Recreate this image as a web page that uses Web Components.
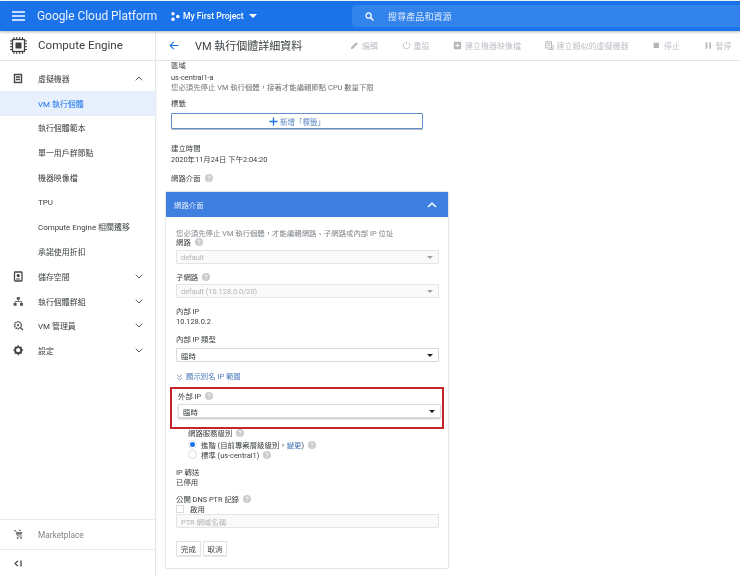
<!DOCTYPE html>
<html lang="zh-Hant"><head><meta charset="utf-8"><title>VM</title>
<style>
html,body{margin:0;padding:0;width:740px;height:576px;overflow:hidden;background:#fff;font-family:Roboto,"Noto Sans CJK TC",sans-serif;color:#3c4043;}
</style></head><body>
<gcp-app></gcp-app>
<script>
const FONT='Roboto,"Noto Sans CJK TC",sans-serif';
function el(name,html,css){
  customElements.define(name,class extends HTMLElement{
    constructor(){super();const r=this.attachShadow({mode:'open'});
      r.innerHTML='<style>'+css+'</style>'+(typeof html==='function'?html(this):html);}
  });
}
const HELP='<svg width="8" height="8" viewBox="0 0 8 8" style="vertical-align:-1px;margin-left:4px"><circle cx="4" cy="4" r="4" fill="#c9cbce"/><path d="M2.900 3.100a1.100 1.100 0 1 1 1.700 1c-.4.3-.6.4-.6.9" fill="none" stroke="#fff" stroke-width=".8"/><circle cx="4" cy="6.200" r=".5" fill="#fff"/></svg>';

el('top-bar',`
<svg class="burger" width="13" height="10" viewBox="0 0 13 10"><path d="M0 1h13M0 5h13M0 9h13" stroke="#fff" stroke-width="1.400"/></svg>
<span class="brand">Google Cloud Platform</span>
<svg class="dots" width="9" height="9" viewBox="0 0 9 9"><circle cx="2" cy="1.800" r="1.700" fill="#fff"/><circle cx="2" cy="7.200" r="1.700" fill="#fff"/><circle cx="6.800" cy="4.500" r="1.800" fill="#fff"/></svg>
<span class="proj">My First Project</span>
<svg class="caret" width="8" height="4" viewBox="0 0 8 4"><path d="M0 0h8L4 4z" fill="#fff"/></svg>
<div class="search"><svg width="9" height="9" viewBox="0 0 10 10"><circle cx="4" cy="4" r="2.900" fill="none" stroke="#fff" stroke-width="1.400"/><path d="M6.200 6.200 9.400 9.400" stroke="#fff" stroke-width="1.600"/></svg><span>搜尋產品和資源</span></div>`,
`:host{display:flex;align-items:center;height:30px;margin-top:1px;background:#1a73e8;color:#fff;box-shadow:0 1px 3px rgba(0,0,0,.3);position:relative;z-index:2}
.burger{margin-left:12px;flex:none}.brand{margin-left:12px;font:400 11.900px ${FONT};width:134px;white-space:nowrap;color:#e8f0fe;flex:none}
.dots{flex:none}.proj{margin-left:3px;font:500 8.600px ${FONT};white-space:nowrap;width:60px;flex:none}
.caret{margin-left:6px;flex:none}
.search{margin-left:95px;width:388px;height:22px;background:#3383ec;border-radius:4px 0 0 4px;display:flex;align-items:center;flex:none}
.search svg{margin-left:13px}.search span{margin-left:14px;font:400 9.100px ${FONT};color:#dbe8fb;white-space:nowrap}`);

const chip='<svg width="19" height="19" viewBox="0 0 19 19"><path d="M5 1v17M7.700 1v17M10.700 1v17M13.500 1v17M1 5h17M1 7.700h17M1 10.700h17M1 13.500h17" stroke="#3c4043" stroke-width="1"/><rect x="3.500" y="3.500" width="12" height="12" fill="#fff" stroke="#3c4043" stroke-width="1.300"/><rect x="6.500" y="6.500" width="6" height="6" fill="#3c4043"/></svg>';
el('side-bar',`
<div class="head">${chip}<span>Compute Engine</span></div>
<div class="nav"><slot></slot></div>
<div class="foot"><slot name="foot"></slot></div>`,
`:host{display:flex;flex-direction:column;flex:none;border-right:1px solid #e6e7e8;box-shadow:1px 0 2px rgba(0,0,0,.04);height:545px;box-sizing:border-box;width:156px}
.head{height:30px;padding-bottom:1px;display:flex;align-items:center;border-bottom:1px solid #e3e4e6;box-sizing:border-box;flex:none}
.head svg{margin-left:9px}.head span{margin-left:10px;font:400 11.600px ${FONT};color:#3c4043;white-space:nowrap}
.nav{padding-top:5.200px;flex:1}
.foot{border-top:1px solid #e8e9ea;}`);

const ICONS={
 vm:'<rect x="1.500" y="1.500" width="7" height="8" fill="none" stroke="#444" stroke-width="1.400"/><path d="M3 4h4M3 6.500h4" stroke="#444" stroke-width="1.300"/>',
 disk:'<rect x="1.500" y="1" width="7.500" height="9" rx=".8" fill="none" stroke="#444" stroke-width="1.300"/><circle cx="5.200" cy="4.600" r="1.600" fill="#444"/><path d="M3 8h4" stroke="#444"/>',
 group:'<path d="M3.800 1h3v2.700h-3zM.6 7h3v2.800h-3zM7 7h3v2.800h-3z" fill="#555"/><path d="M5.300 3.700v2M2 7V5.500h6.600V7" fill="none" stroke="#555" stroke-width=".8"/>',
 mgr:'<circle cx="5" cy="5.200" r="3.400" fill="none" stroke="#555" stroke-width="1.600" stroke-dasharray="1.500 .6"/><circle cx="5" cy="5.200" r="1.100" fill="#555"/><path d="M7 7.300 10 10" stroke="#555" stroke-width="1.200"/>',
 gear:'<circle cx="5.200" cy="5.200" r="3.100" fill="none" stroke="#444" stroke-width="1.900"/><path d="M5.200 .3v2M5.200 8v2.200M.4 5.200h2M8 5.200h2.200M1.800 1.800l1.400 1.400M7.200 7.200l1.400 1.400M8.600 1.800 7.200 3.200M3.200 7.200 1.800 8.600" stroke="#444" stroke-width="1.200"/>',
 cart:'<path d="M1 1.500h1.500L4.500 7H9" fill="none" stroke="#777" stroke-width="1"/><path d="M3 3h6.500L8.300 5.800H4z" fill="#777"/><circle cx="4.600" cy="9" r="1" fill="#777"/><circle cx="8.200" cy="9" r="1" fill="#777"/><path d="M6 .5 7 2 8.200.8" stroke="#777" fill="none"/>'};
el('nav-item',h=>{
  const ic=h.getAttribute('icon'),ch=h.getAttribute('chev');
  return (ic?`<svg class="i" width="11" height="11" viewBox="0 0 11 11">${ICONS[ic]}</svg>`:'')+
  `<span class="t"><slot></slot></span>`+
  (ch?`<svg class="c" width="8" height="5" viewBox="0 0 8 5"><path d="${ch==='up'?'M.7 4.300 4 1l3.300 3.300':'M.7.7 4 4 7.300.7'}" fill="none" stroke="#5f6368" stroke-width="1"/></svg>`:'');
},`:host{display:flex;align-items:center;height:24.730px;position:relative;font:400 7.950px ${FONT};color:#3c4043;white-space:nowrap}
:host([active]){background:#e8f0fe;color:#1a73e8}
.i{position:absolute;left:13px;top:7px}.t{position:absolute;left:38px}.c{position:absolute;left:135px;top:10px}`);

el('foot-item',`<svg width="11" height="11" viewBox="0 0 11 11">${ICONS.cart}</svg><span><slot></slot></span>`,
`:host{display:flex;align-items:center;height:29px;border-bottom:1px solid #e8e9ea;font:400 8.300px ${FONT};color:#80868b}
svg{margin-left:13px}span{margin-left:14px}`);
el('foot-collapse',`<svg width="8" height="7" viewBox="0 0 8 7"><path d="M4 .8 1 3.500 4 6.200" fill="none" stroke="#333" stroke-width="1.100"/><path d="M7 .5v6" stroke="#333" stroke-width="1.200"/></svg>`,
`:host{display:flex;align-items:center;height:26px}svg{margin-left:14px}`);

const T={
 edit:'<path d="M1 10 1.600 7.400 7.600 1.400 9.600 3.400 3.600 9.400z" fill="#b4b6b9"/>',
 reset:'<path d="M3.200 2.200a4 4 0 1 0 4.600 0" fill="none" stroke="#b4b6b9" stroke-width="1"/><path d="M5.500.5v4" stroke="#b4b6b9" stroke-width="1"/>',
 snap:'<rect x="1" y="1" width="9" height="9" rx="1" fill="#b4b6b9"/><path d="M5.500 3v5M3 5.500h5" stroke="#fff" stroke-width="1.300"/>',
 clone:'<rect x="1" y="1" width="7" height="7.500" fill="none" stroke="#b4b6b9" stroke-width="1.200"/><path d="M2.500 3.300h4M2.500 5.300h4" stroke="#b4b6b9" stroke-width="1"/><path d="M4 10.300h6V5" fill="none" stroke="#b4b6b9" stroke-width="1.200"/>',
 stop:'<rect x="2" y="2.200" width="6.500" height="6.500" fill="#b4b6b9"/>',
 pause:'<path d="M2 1.500h2v8H2zM6.500 1.500h2v8h-2z" fill="#b4b6b9"/>'};
el('tool-btn',h=>`<svg width="9" height="9" viewBox="0 0 11 11">${T[h.getAttribute('icon')]}</svg><span><slot></slot></span>`,
`:host{display:flex;align-items:center;gap:3px;font:400 8px ${FONT};color:#bdc1c6;white-space:nowrap}`);
el('sub-bar',`
<svg class="back" width="10" height="9" viewBox="0 0 11 10"><path d="M10.500 5H1.500M5.300 1 1.200 5l4.100 4" fill="none" stroke="#1a73e8" stroke-width="1.200"/></svg>
<span class="title">VM 執行個體詳細資料</span><div class="tools"><slot></slot></div>`,
`:host{display:flex;align-items:center;height:30px;padding-bottom:1px;box-sizing:border-box;border-bottom:1px solid #e3e4e6;flex:none;position:relative;z-index:1;background:#fff}
.back{margin-left:13px;flex:none}.title{margin-left:16px;font:400 11px ${FONT};color:#3c4043;white-space:nowrap;width:155px;flex:none}
.tools{display:flex;gap:23.500px;flex:none}`);

el('select-box',h=>`<span><slot></slot></span>`+(h.hasAttribute('nocaret')?'':`<svg width="6" height="3" viewBox="0 0 6 3"><path d="M0 0h6L3 3z" fill="${h.hasAttribute('disabled')?'#9aa0a6':'#222'}"/></svg>`),
`:host{display:flex;align-items:center;justify-content:space-between;box-sizing:border-box;width:263px;height:14px;border:1px solid #e4e5e6;border-radius:1px;padding:0 5px 0 4px;font:400 7.400px ${FONT};color:#3c4043;background:#fff}
:host([disabled]){background:#fafafa;color:#b0b3b6}
:host([raised]){box-shadow:0 1px 2px rgba(0,0,0,.25);border-color:#ddd}`);
el('add-button',`<svg width="9" height="9" viewBox="0 0 9 9"><path d="M4.500 .5v8M.5 4.500h8" stroke="#1a73e8" stroke-width="1.300"/></svg><span><slot></slot></span>`,
`:host{display:flex;align-items:center;justify-content:center;gap:2px;box-sizing:border-box;width:252px;height:16px;border:1px solid #5f8ec8;border-radius:1px;box-shadow:0 1px 0 #b8bcc0;font:400 7.500px ${FONT};color:#5c87c4}`);
el('flat-button',`<slot></slot>`,
`:host{display:flex;align-items:center;justify-content:center;box-sizing:border-box;height:15px;border:1px solid #dfe1e3;box-shadow:0 1px 0 #e8e8e8;border-radius:1px;font:400 7.400px ${FONT};color:#3c4043;background:#fff}`);
el('radio-dot','',
`:host{display:inline-block;box-sizing:border-box;width:9px;height:9px;border-radius:50%;border:1px solid #dcdcdc;position:relative;flex:none}
:host([on]){border:2px solid #fff;outline:1px solid #dde3ee;background:#1a73e8;outline-offset:-1px}`);

el('net-panel',`<div class="bar"><span>網路介面</span><svg width="10" height="6" viewBox="0 0 10 6"><path d="M1 5 5 1.200 9 5" fill="none" stroke="#fff" stroke-width="1.500"/></svg></div><div class="body"><slot></slot></div>`,
`:host{display:block;box-sizing:border-box;width:282px;height:376px;margin-left:10px;box-shadow:0 0 2px rgba(0,0,0,.3);background:#fff;font:400 7.400px ${FONT};color:#3c4043;white-space:nowrap}
.bar{height:25px;background:#3f7fe0;display:flex;align-items:center;justify-content:space-between;padding:0 11px 0 8px;color:#e4edfb}
.body{padding:0 10px}`);

el('gcp-app',`
<top-bar></top-bar>
<div class="row">
  <side-bar>
    <nav-item icon="vm" chev="up">虛擬機器</nav-item>
    <nav-item active>VM 執行個體</nav-item>
    <nav-item>執行個體範本</nav-item>
    <nav-item>單一用戶群節點</nav-item>
    <nav-item>機器映像檔</nav-item>
    <nav-item>TPU</nav-item>
    <nav-item>Compute Engine 相關遷移</nav-item>
    <nav-item>承諾使用折扣</nav-item>
    <nav-item icon="disk" chev="down">儲存空間</nav-item>
    <nav-item icon="group" chev="down">執行個體群組</nav-item>
    <nav-item icon="mgr" chev="down">VM 管理員</nav-item>
    <nav-item icon="gear" chev="down">設定</nav-item>
    <foot-item slot="foot">Marketplace</foot-item>
    <foot-collapse slot="foot"></foot-collapse>
  </side-bar>
  <main>
    <sub-bar>
      <tool-btn icon="edit">編輯</tool-btn><tool-btn icon="reset">重設</tool-btn><tool-btn icon="snap">建立機器映像檔</tool-btn><tool-btn icon="clone">建立類似的虛擬機器</tool-btn><tool-btn icon="stop">停止</tool-btn><tool-btn icon="pause">暫停</tool-btn>
    </sub-bar>
    <div class="content">
      <div class="top">
        <div class="ln">區域</div>
        <div class="ln" style="margin-top:2px">us-central1-a</div>
        <div class="ln" style="color:#6f7378">您必須先停止 VM 執行個體，接著才能編輯節點 CPU 數量下限</div>
        <div class="ln" style="margin-top:6px">標籤</div>
        <add-button style="margin-top:4px">新增「標籤」</add-button>
        <div class="ln" style="margin-top:15px">建立時間</div>
        <div class="ln" style="margin-top:1px">2020年11月24日 下午2:04:20</div>
        <div class="ln" style="margin-top:9px">網路介面${HELP}</div>
      </div>
      <net-panel>
        <div class="ln" style="margin-top:12px;color:#80868b">您必須先停止 VM 執行個體，才能編輯網路、子網路或內部 IP 位址</div>
        <div class="ln" style="margin-top:-1px">網路${HELP}</div>
        <select-box disabled style="margin-top:2px">default</select-box>
        <div class="ln" style="margin-top:9px">子網路${HELP}</div>
        <select-box disabled style="margin-top:1px">default (10.128.0.0/20)</select-box>
        <div class="ln" style="margin-top:9px">內部 IP</div>
        <div class="ln">10.128.0.2</div>
        <div class="ln" style="margin-top:8px">內部 IP 類型</div>
        <select-box style="margin-top:3px;border-color:#d8d9da">臨時</select-box>
        <div class="ln link" style="margin-top:10px"><svg width="7" height="7" viewBox="0 0 7 7" style="margin-right:3px"><path d="M1 1 3.500 3 6 1M1 4l2.500 2L6 4" fill="none" stroke="#7a8fb5" stroke-width=".8"/></svg>顯示別名 IP 範圍</div>
        <div class="red">
          <div class="ln">外部 IP${HELP}</div>
          <select-box raised style="margin-top:2px">臨時</select-box>
        </div>
        <div class="tier">
          <div class="ln">網路服務級別${HELP}</div>
          <div class="rad"><radio-dot on></radio-dot><span>進階 (目前專案層級級別，<a>變更</a>)${HELP}</span></div>
          <div class="rad"><radio-dot></radio-dot><span>標準 (us-central1)${HELP}</span></div>
        </div>
        <div class="ln" style="margin-top:9px">IP 轉送</div>
        <div class="ln">已停用</div>
        <div class="ln" style="margin-top:7px">公開 DNS PTR 記錄${HELP}</div>
        <div class="chk"><i></i>啟用</div>
        <select-box disabled nocaret style="margin-top:1px">PTR 網域名稱</select-box>
        <div class="btns"><flat-button style="width:25px">完成</flat-button><flat-button style="width:24px">取消</flat-button></div>
      </net-panel>
    </div>
  </main>
</div>`,
`:host{display:block;width:740px;height:576px;overflow:hidden;position:relative;filter:blur(.35px)}
.row{display:flex}main{flex:none;width:584px;height:545px;display:flex;flex-direction:column}
.content{flex:1;font:400 7.400px ${FONT};color:#3c4043;white-space:nowrap}
.top{padding:0 0 8px 15px}
.ln{line-height:10px;height:10px}
.link{color:#4a78b8;display:flex;align-items:center}
.red{box-sizing:border-box;width:274px;height:42px;border:2px solid #c5242b;margin:5px 0 0 -6px;padding:3px 0 0 6px}
.tier{padding-left:12px}
.rad{display:flex;align-items:center;gap:4px;height:10px}
a{color:#3b6fb5}
.chk{display:flex;align-items:center;height:9px;gap:6px;margin-top:-1px}.chk i{display:block;width:8px;height:8px;border:1px solid #dcdcdc;box-sizing:border-box}
.btns{display:flex;gap:2px;margin-top:13px}`);
</script></body></html>
